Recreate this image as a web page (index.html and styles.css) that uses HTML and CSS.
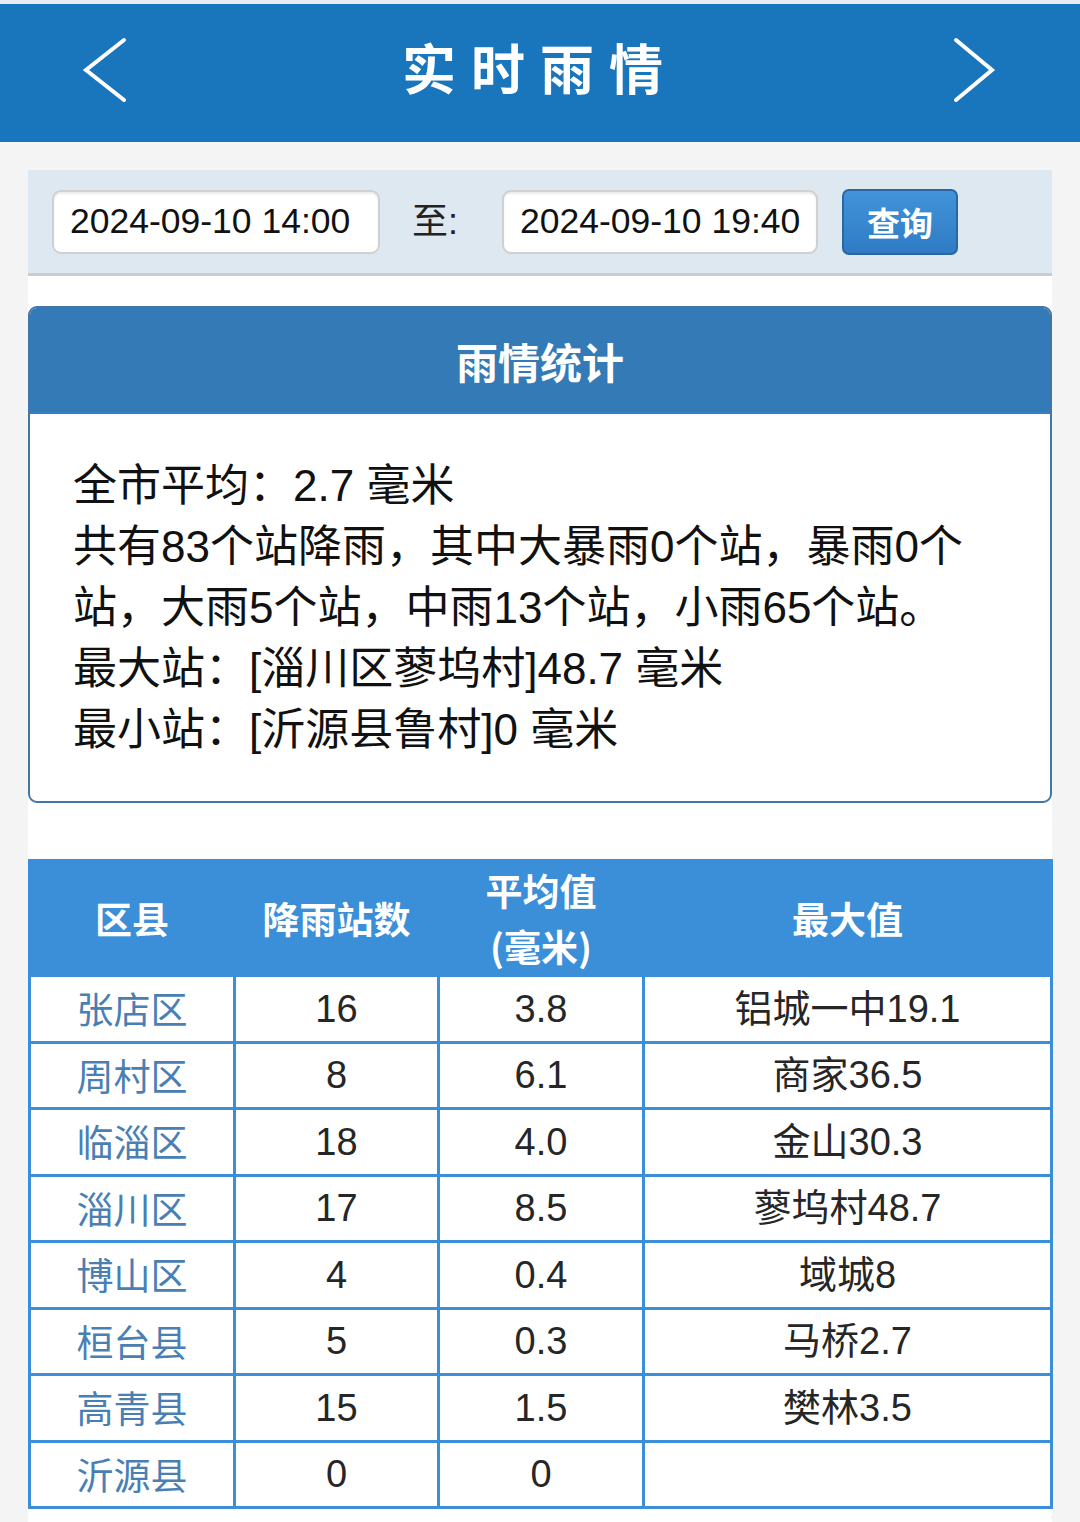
FILE: index.html
```html
<!DOCTYPE html>
<html lang="zh-CN">
<head>
<meta charset="utf-8">
<title>实时雨情</title>
<link rel="stylesheet" href="styles.css">
</head>
<body>
<div class="topstrip"></div>
<header class="appbar">
  <svg class="nav-icon" width="60" height="80" viewBox="0 0 60 80"><polyline points="44,10 6,40 44,70" fill="none" stroke="#fff" stroke-width="4" stroke-linecap="round" stroke-linejoin="miter"/></svg>
  <h1 class="app-title">实时雨情</h1>
  <svg class="nav-icon" width="60" height="80" viewBox="0 0 60 80"><polyline points="16,10 52,40 16,70" fill="none" stroke="#fff" stroke-width="4" stroke-linecap="round" stroke-linejoin="miter"/></svg>
</header>
<main class="content">
  <div class="search">
    <input class="date-input date-from" type="text" value="2024-09-10 14:00" readonly>
    <span class="to-label">至:</span>
    <input class="date-input date-to" type="text" value="2024-09-10 19:40" readonly>
    <button class="query-btn" type="button">查询</button>
  </div>

  <section class="panel">
    <div class="panel-head">雨情统计</div>
    <div class="panel-body">
      <p>全市平均：2.7 毫米</p>
      <p>共有83个站降雨，其中大暴雨0个站，暴雨0个站，大雨5个站，中雨13个站，小雨65个站。</p>
      <p>最大站：[淄川区蓼坞村]48.7 毫米</p>
      <p>最小站：[沂源县鲁村]0 毫米</p>
    </div>
  </section>

  <table class="rain-table">
    <colgroup>
      <col class="c1"><col class="c2"><col class="c3"><col class="c4">
    </colgroup>
    <thead>
      <tr><th>区县</th><th>降雨站数</th><th>平均值<br>(毫米)</th><th>最大值</th></tr>
    </thead>
    <tbody>
      <tr><td class="dist">张店区</td><td>16</td><td>3.8</td><td>铝城一中19.1</td></tr>
      <tr><td class="dist">周村区</td><td>8</td><td>6.1</td><td>商家36.5</td></tr>
      <tr><td class="dist">临淄区</td><td>18</td><td>4.0</td><td>金山30.3</td></tr>
      <tr><td class="dist">淄川区</td><td>17</td><td>8.5</td><td>蓼坞村48.7</td></tr>
      <tr><td class="dist">博山区</td><td>4</td><td>0.4</td><td>域城8</td></tr>
      <tr><td class="dist">桓台县</td><td>5</td><td>0.3</td><td>马桥2.7</td></tr>
      <tr><td class="dist">高青县</td><td>15</td><td>1.5</td><td>樊林3.5</td></tr>
      <tr><td class="dist">沂源县</td><td>0</td><td>0</td><td></td></tr>
    </tbody>
  </table>
</main>
</body>
</html>
```
FILE: styles.css
```css
html, body {
  margin: 0;
  padding: 0;
}
body {
  background: #f4f4f5;
  font-family: "Liberation Sans", "Noto Sans CJK SC", sans-serif;
  color: #1b1b1b;
  height: 1522px;
  overflow: hidden;
}
.topstrip {
  height: 4px;
  background: #e6ecf2;
}
.appbar {
  height: 138px;
  background: #1a76bc;
  display: flex;
  align-items: center;
  justify-content: space-between;
  padding: 0 80px 0 80px;
}
.nav-icon {
  display: block;
  flex: none;
  margin-top: -6px;
}
.app-title {
  margin: 0 0 12px 0;
  color: #fff;
  font-family: "Noto Sans CJK SC", sans-serif;
  font-weight: 700;
  font-size: 54px;
  letter-spacing: 15px;
  line-height: 1;
}
.content {
  margin: 28px 28px 0 28px;
  background: #fff;
  min-height: 1400px;
}
.search {
  height: 103px;
  background: #dee8f1;
  border-bottom: 3px solid #c8cdd2;
  display: flex;
  align-items: center;
  padding: 0 24px;
  box-sizing: content-box;
}
.date-input {
  height: 64px;
  box-sizing: border-box;
  border: 2px solid #d0d0d0;
  border-radius: 9px;
  background: #fff;
  box-shadow: inset 0 2px 2px rgba(0,0,0,0.08);
  font-family: "Liberation Sans", sans-serif;
  font-size: 35.5px;
  color: #111;
  padding: 0 14px 0 16px;
  outline: none;
  margin: 0;
}
.date-from {
  width: 328px;
}
.date-to {
  width: 316px;
}
.to-label {
  font-size: 36px;
  color: #222;
  width: 122px;
  text-align: center;
  box-sizing: border-box;
  padding-right: 12px;
  position: relative;
  top: -4px;
}
.query-btn {
  margin-left: 24px;
  width: 116px;
  height: 66px;
  border: 2px solid #2a66a0;
  border-radius: 7px;
  background: linear-gradient(#4193da, #2f7cc4);
  color: #fff;
  font-family: "Noto Sans CJK SC", sans-serif;
  font-weight: 700;
  font-size: 33px;
  padding: 0;
}
.panel {
  margin-top: 30px;
  border: 2px solid #4276a8;
  border-radius: 9px;
  overflow: hidden;
  background: #fff;
}
.panel-head {
  height: 104px;
  background: #337ab7;
  color: #fff;
  font-family: "Noto Sans CJK SC", sans-serif;
  font-weight: 700;
  font-size: 42px;
  display: flex;
  align-items: center;
  justify-content: center;
  border-bottom: 2px solid #3380c4;
}
.panel-body {
  padding: 41px 65px 41px 43px;
  font-size: 44px;
  line-height: 61px;
  color: #111;
}
.panel-body p {
  margin: 0;
}
.rain-table {
  margin-top: 56px;
  width: 1022px;
  border-collapse: collapse;
  table-layout: fixed;
  border: 3px solid #3a8fd8;
  font-size: 38px;
}
.c1 { width: 205px; }
.c2 { width: 204px; }
.c3 { width: 205px; }
.c4 { width: 408px; }
.rain-table th {
  background: #3a8fd8;
  color: #fff;
  font-family: "Noto Sans CJK SC", sans-serif;
  font-weight: 700;
  font-size: 37px;
  line-height: 56px;
  height: 110px;
  padding: 0;
  border: 3px solid #3a8fd8;
}
.rain-table td {
  height: 63.5px;
  padding: 0;
  text-align: center;
  border: 3px solid #3a8fd8;
  color: #262626;
  line-height: 1;
}
.rain-table td.dist {
  color: #4a7fb4;
  font-family: "Noto Sans CJK SC", sans-serif;
  font-size: 37px;
}
```
